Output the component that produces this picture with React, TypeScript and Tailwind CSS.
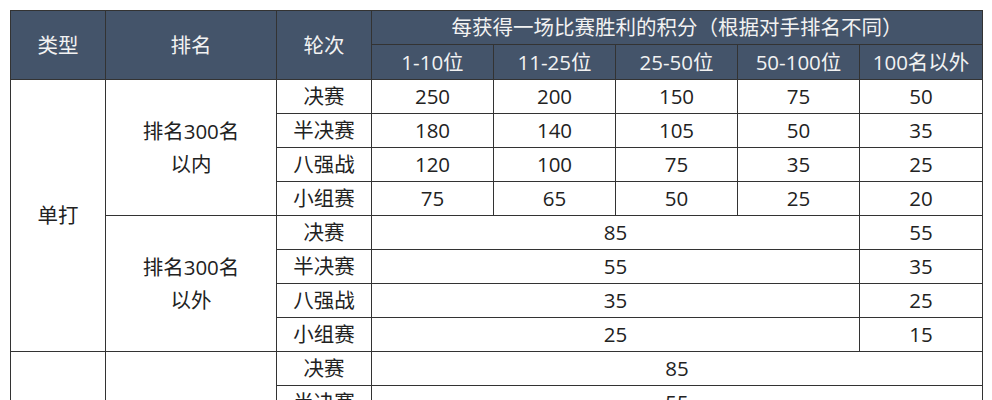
import React from "react";

type Row = { round: string; values: (string | { span: number; value: string })[] };

const HEAD_BG = "bg-[#44546a]";
const CELL = "border border-[#333] text-center align-middle p-0";

const withinRows: Row[] = [
  { round: "决赛", values: ["250", "200", "150", "75", "50"] },
  { round: "半决赛", values: ["180", "140", "105", "50", "35"] },
  { round: "八强战", values: ["120", "100", "75", "35", "25"] },
  { round: "小组赛", values: ["75", "65", "50", "25", "20"] },
];

const outsideRows: Row[] = [
  { round: "决赛", values: [{ span: 4, value: "85" }, "55"] },
  { round: "半决赛", values: [{ span: 4, value: "55" }, "35"] },
  { round: "八强战", values: [{ span: 4, value: "35" }, "25"] },
  { round: "小组赛", values: [{ span: 4, value: "25" }, "15"] },
];

const doublesRows: Row[] = [
  { round: "决赛", values: [{ span: 5, value: "85" }] },
  { round: "半决赛", values: [{ span: 5, value: "55" }] },
  { round: "八强战", values: [{ span: 5, value: "35" }] },
  { round: "小组赛", values: [{ span: 5, value: "25" }] },
];

const ValueCells = ({ row }: { row: Row }) => (
  <>
    <td className={CELL}>{row.round}</td>
    {row.values.map((v, i) =>
      typeof v === "string" ? (
        <td key={i} className={CELL}>
          {v}
        </td>
      ) : (
        <td key={i} colSpan={v.span} className={CELL}>
          {v.value}
        </td>
      )
    )}
  </>
);

const Group = ({
  type,
  typeSpan,
  label,
  rows,
}: {
  type?: string;
  typeSpan?: number;
  label: React.ReactNode;
  rows: Row[];
}) => (
  <>
    {rows.map((row, i) => (
      <tr key={i} className="h-[34px]">
        {i === 0 && type !== undefined ? (
          <td rowSpan={typeSpan} className={`${CELL} leading-none`}>
            {type}
          </td>
        ) : null}
        {i === 0 ? (
          <td rowSpan={rows.length} className={`${CELL} leading-[33px]`}>
            {label}
          </td>
        ) : null}
        <ValueCells row={row} />
      </tr>
    ))}
  </>
);

export default function App() {
  return (
    <div className="w-[992px] h-[400px] overflow-hidden bg-white pt-[10px] pl-[10px] font-['Open_Sans','Noto_Sans_CJK_SC',sans-serif] text-[20.5px] leading-none text-[#222]">
      <table className="table-fixed border-collapse w-[972px]">
        <colgroup>
          <col className="w-[95px]" />
          <col className="w-[171px]" />
          <col className="w-[95px]" />
          <col className="w-[122px]" />
          <col className="w-[122px]" />
          <col className="w-[122px]" />
          <col className="w-[122px]" />
          <col className="w-[123px]" />
        </colgroup>
        <thead className={`${HEAD_BG} text-[#f2f2f2]`}>
          <tr className="h-[34px]">
            <th rowSpan={2} className={`${CELL} font-normal`}>类型</th>
            <th rowSpan={2} className={`${CELL} font-normal`}>排名</th>
            <th rowSpan={2} className={`${CELL} font-normal`}>轮次</th>
            <th colSpan={5} className={`${CELL} font-normal`}>
              每获得一场比赛胜利的积分（根据对手排名不同）
            </th>
          </tr>
          <tr className="h-[35px]">
            <th className={`${CELL} font-normal`}>1-10位</th>
            <th className={`${CELL} font-normal`}>11-25位</th>
            <th className={`${CELL} font-normal`}>25-50位</th>
            <th className={`${CELL} font-normal`}>50-100位</th>
            <th className={`${CELL} font-normal`}>100名以外</th>
          </tr>
        </thead>
        <tbody>
          <Group
            type="单打"
            typeSpan={8}
            label={
              <>
                排名300名
                <br />
                以内
              </>
            }
            rows={withinRows}
          />
          <Group
            label={
              <>
                排名300名
                <br />
                以外
              </>
            }
            rows={outsideRows}
          />
          <Group type="双打" typeSpan={4} label="不限" rows={doublesRows} />
        </tbody>
      </table>
    </div>
  );
}
